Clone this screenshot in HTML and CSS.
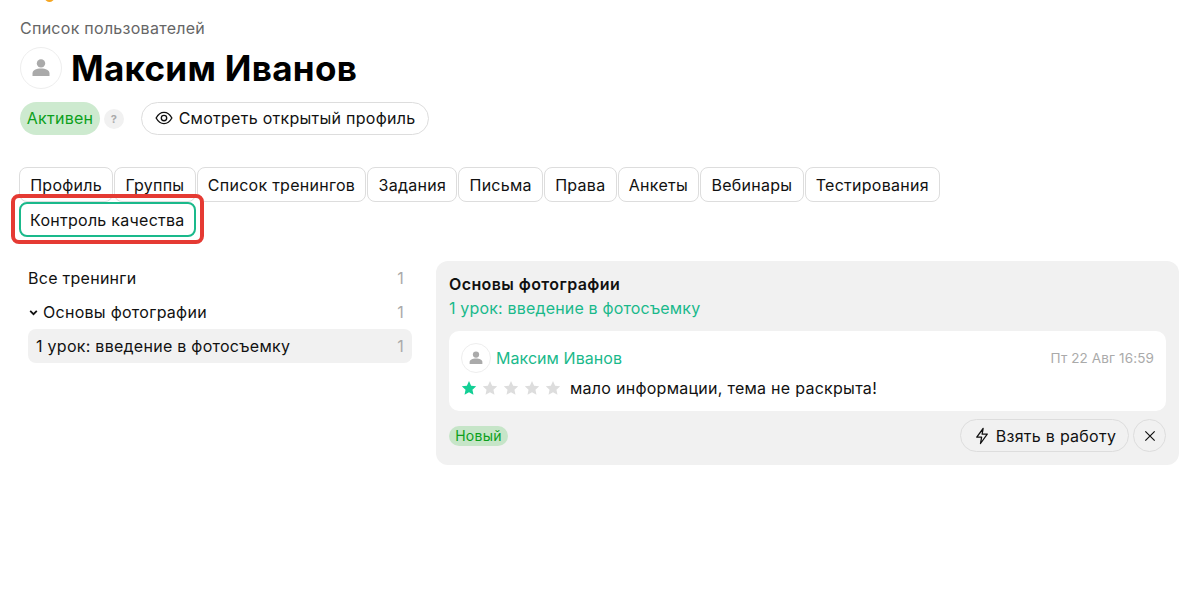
FILE: index.html
```html
<!DOCTYPE html>
<html lang="ru">
<head>
<meta charset="utf-8">
<title>Максим Иванов</title>
<link rel="stylesheet" href="styles.css">
</head>
<body>
<div class="page">
  <div class="top-mark"></div>
  <a class="crumb">Список пользователей</a>
  <div class="title-row">
    <span class="avatar avatar-lg"><svg viewBox="0 0 24 24"><circle cx="12" cy="7.4" r="4.2"/><path d="M3.5 20v-2.6c0-3 3.6-4.8 8.5-4.8s8.5 1.800 8.500 4.800V20z"/></svg></span>
    <h1>Максим Иванов</h1>
  </div>
  <div class="status-row">
    <span class="status">Активен</span>
    <span class="hint">?</span>
    <a class="btn-profile"><svg viewBox="0 0 24 24" class="eye"><path d="M1.500 12C4.300 7 8 4.500 12 4.500s7.700 2.500 10.500 7.500c-2.800 5-6.500 7.500-10.500 7.500S4.300 17 1.500 12z"/><circle cx="12" cy="12" r="3.600"/></svg>Смотреть открытый профиль</a>
  </div>
  <nav class="tabs">
    <a class="tab">Профиль</a><a class="tab">Группы</a><a class="tab">Список тренингов</a><a class="tab">Задания</a><a class="tab">Письма</a><a class="tab">Права</a><a class="tab">Анкеты</a><a class="tab">Вебинары</a><a class="tab">Тестирования</a><a class="tab tab-active">Контроль качества<span class="highlight"></span></a>
  </nav>
  <div class="content">
    <aside class="side">
      <div class="side-item"><span>Все тренинги</span><span class="count">1</span></div>
      <div class="side-item"><span class="group"><svg viewBox="0 0 10 10" class="chev"><path d="M2 3.500l3 3 3-3"/></svg>Основы фотографии</span><span class="count">1</span></div>
      <div class="side-item side-selected"><span>1 урок: введение в фотосъемку</span><span class="count">1</span></div>
    </aside>
    <section class="panel">
      <div class="panel-title">Основы фотографии</div>
      <div class="panel-sub">1 урок: введение в фотосъемку</div>
      <div class="card">
        <div class="card-head">
          <span class="avatar avatar-sm"><svg viewBox="0 0 24 24"><circle cx="12" cy="7.4" r="4.2"/><path d="M3.500 20v-2.600c0-3 3.600-4.800 8.500-4.800s8.500 1.800 8.500 4.800V20z"/></svg></span>
          <span class="author">Максим Иванов</span>
          <span class="date">Пт 22 Авг 16:59</span>
        </div>
        <div class="card-body">
          <span class="stars">
            <svg viewBox="0 0 24 24" class="star on"><path d="M12 1.500l3.200 7 7.600.9-5.600 5.200 1.500 7.500L12 18.300l-6.700 3.800 1.500-7.500L1.200 9.400l7.600-.9z"/></svg>
            <svg viewBox="0 0 24 24" class="star"><path d="M12 1.500l3.200 7 7.600.9-5.600 5.200 1.500 7.500L12 18.300l-6.700 3.800 1.500-7.500L1.200 9.400l7.600-.9z"/></svg>
            <svg viewBox="0 0 24 24" class="star"><path d="M12 1.500l3.200 7 7.600.9-5.600 5.200 1.500 7.500L12 18.300l-6.700 3.800 1.500-7.500L1.200 9.400l7.600-.9z"/></svg>
            <svg viewBox="0 0 24 24" class="star"><path d="M12 1.500l3.200 7 7.600.9-5.600 5.200 1.500 7.500L12 18.300l-6.700 3.800 1.500-7.500L1.200 9.400l7.600-.9z"/></svg>
            <svg viewBox="0 0 24 24" class="star"><path d="M12 1.500l3.200 7 7.600.9-5.600 5.200 1.500 7.500L12 18.300l-6.700 3.800 1.500-7.500L1.200 9.400l7.600-.9z"/></svg>
          </span>
          <span class="comment">мало информации, тема не раскрыта!</span>
        </div>
      </div>
      <div class="panel-foot">
        <span class="badge">Новый</span>
        <a class="btn-take"><svg viewBox="0 0 24 24" class="bolt"><path d="M13.500 2L5 13.500h6.500L10 22l9-12.500h-6.800z"/></svg>Взять в работу</a>
        <a class="btn-close"><svg viewBox="0 0 24 24"><path d="M5 5l14 14M19 5L5 19"/></svg></a>
      </div>
    </section>
  </div>
</div>
</body>
</html>
```
FILE: styles.css
```css
* { box-sizing: border-box; }
html, body { margin: 0; height: 100%; }
body { background: #fff; color: #111; font-family: Inter, "Noto Sans", sans-serif; font-size: 16px; letter-spacing: 0.27px; overflow: hidden; }
.page { position: relative; padding: 19px 21px 0 20px; }
.top-mark { position: absolute; left: 45px; top: -6px; width: 9px; height: 8px; border-radius: 50%; background: #f5a623; }
.crumb { display: block; color: #666; line-height: 18px; }
.title-row { display: flex; align-items: center; gap: 9px; margin-top: 10px; }
h1 { margin: 0; font-size: 35px; line-height: 42px; font-weight: 700; letter-spacing: 0.3px; color: #000; }
.avatar { display: inline-flex; align-items: center; justify-content: center; border: 1px solid #eee; border-radius: 50%; background: #fff; flex: none; }
.avatar svg { fill: #aaa; }
.avatar-lg { width: 42px; height: 42px; }
.avatar-lg svg { width: 24px; height: 24px; }
.avatar-sm { width: 30px; height: 30px; }
.avatar-sm svg { width: 18px; height: 18px; }
.status-row { display: flex; align-items: center; margin-top: 13px; }
.status { width: 80px; height: 33px; border-radius: 17px; background: #cdeacf; color: #0ca01c; display: flex; align-items: center; justify-content: center; padding-bottom: 1px; }
.hint { width: 20px; height: 20px; border-radius: 50%; background: #f1f1f1; color: #aaa; font-size: 11px; font-weight: 700; display: flex; align-items: center; justify-content: center; margin-left: 4px; }
.btn-profile { margin-left: 17px; width: 288px; height: 33px; border: 1px solid #ddd; border-radius: 17px; display: flex; align-items: center; justify-content: center; gap: 6px; color: #111; padding-bottom: 1px; }
.eye { width: 18px; height: 18px; fill: none; stroke: #111; stroke-width: 1.800; }
.tabs { display: flex; flex-wrap: wrap; gap: 0 1px; margin-top: 32px; margin-left: -1px; width: 930px; }
.tab { position: relative; height: 35px; padding: 0 10.2px; border: 1px solid #ddd; border-radius: 8px; display: flex; align-items: center; color: #111; }
.tab-active { border: 2px solid #1ab98b; padding: 0 9px; }
.highlight { position: absolute; left: -10px; top: -10px; right: -10px; bottom: -9px; border: 4px solid #e53a33; border-radius: 8px; pointer-events: none; }
.content { display: flex; align-items: flex-start; margin-top: 24px; }
.side { width: 384px; margin-left: 8px; flex: none; }
.side-item { height: 34px; display: flex; align-items: center; justify-content: space-between; padding-right: 8px; color: #111; }
.side-selected { background: #f1f1f1; border-radius: 8px; padding-left: 8px; }
.group { display: flex; align-items: center; gap: 4px; }
.chev { width: 11px; height: 11px; fill: none; stroke: #111; stroke-width: 1.600; }
.count { color: #aaa; }
.panel { width: 743px; margin-left: 24px; height: 204px; background: #f1f1f1; border-radius: 12px; padding: 13px; }
.panel-title { font-weight: 600; letter-spacing: 0.4px; line-height: 20px; color: #111; }
.panel-sub { margin-top: 4px; line-height: 20px; letter-spacing: 0.17px; color: #1ab98b; }
.card { margin-top: 13px; height: 80px; background: #fff; border-radius: 10px; padding: 12px 12px 0; }
.card-head { display: flex; align-items: center; height: 30px; }
.author { margin-left: 5px; letter-spacing: 0.05px; color: #1ab98b; }
.date { margin-left: auto; color: #aaa; font-size: 13.500px; letter-spacing: 0.13px; }
.card-body { display: flex; align-items: center; margin-top: 3px; height: 24px; }
.stars { display: flex; gap: 5px; }
.star { width: 16px; height: 16px; fill: #ddd; }
.star.on { fill: #13cf95; }
.comment { margin-left: 9px; }
.panel-foot { display: flex; align-items: center; margin-top: 8px; }
.badge { height: 20px; width: 59px; border-radius: 10px; background: #c6e5c8; color: #0ca01c; font-size: 14px; display: flex; align-items: center; justify-content: center; }
.btn-take { margin-left: auto; width: 169px; height: 33px; border: 1px solid #ddd; border-radius: 17px; display: flex; align-items: center; justify-content: center; gap: 5px; }
.bolt { width: 18px; height: 20px; fill: none; stroke: #111; stroke-width: 1.700; stroke-linejoin: round; }
.btn-close { margin-left: 4px; width: 33px; height: 33px; border: 1px solid #ddd; border-radius: 50%; display: flex; align-items: center; justify-content: center; }
.btn-close svg { width: 16px; height: 16px; fill: none; stroke: #111; stroke-width: 1.800; }
```
